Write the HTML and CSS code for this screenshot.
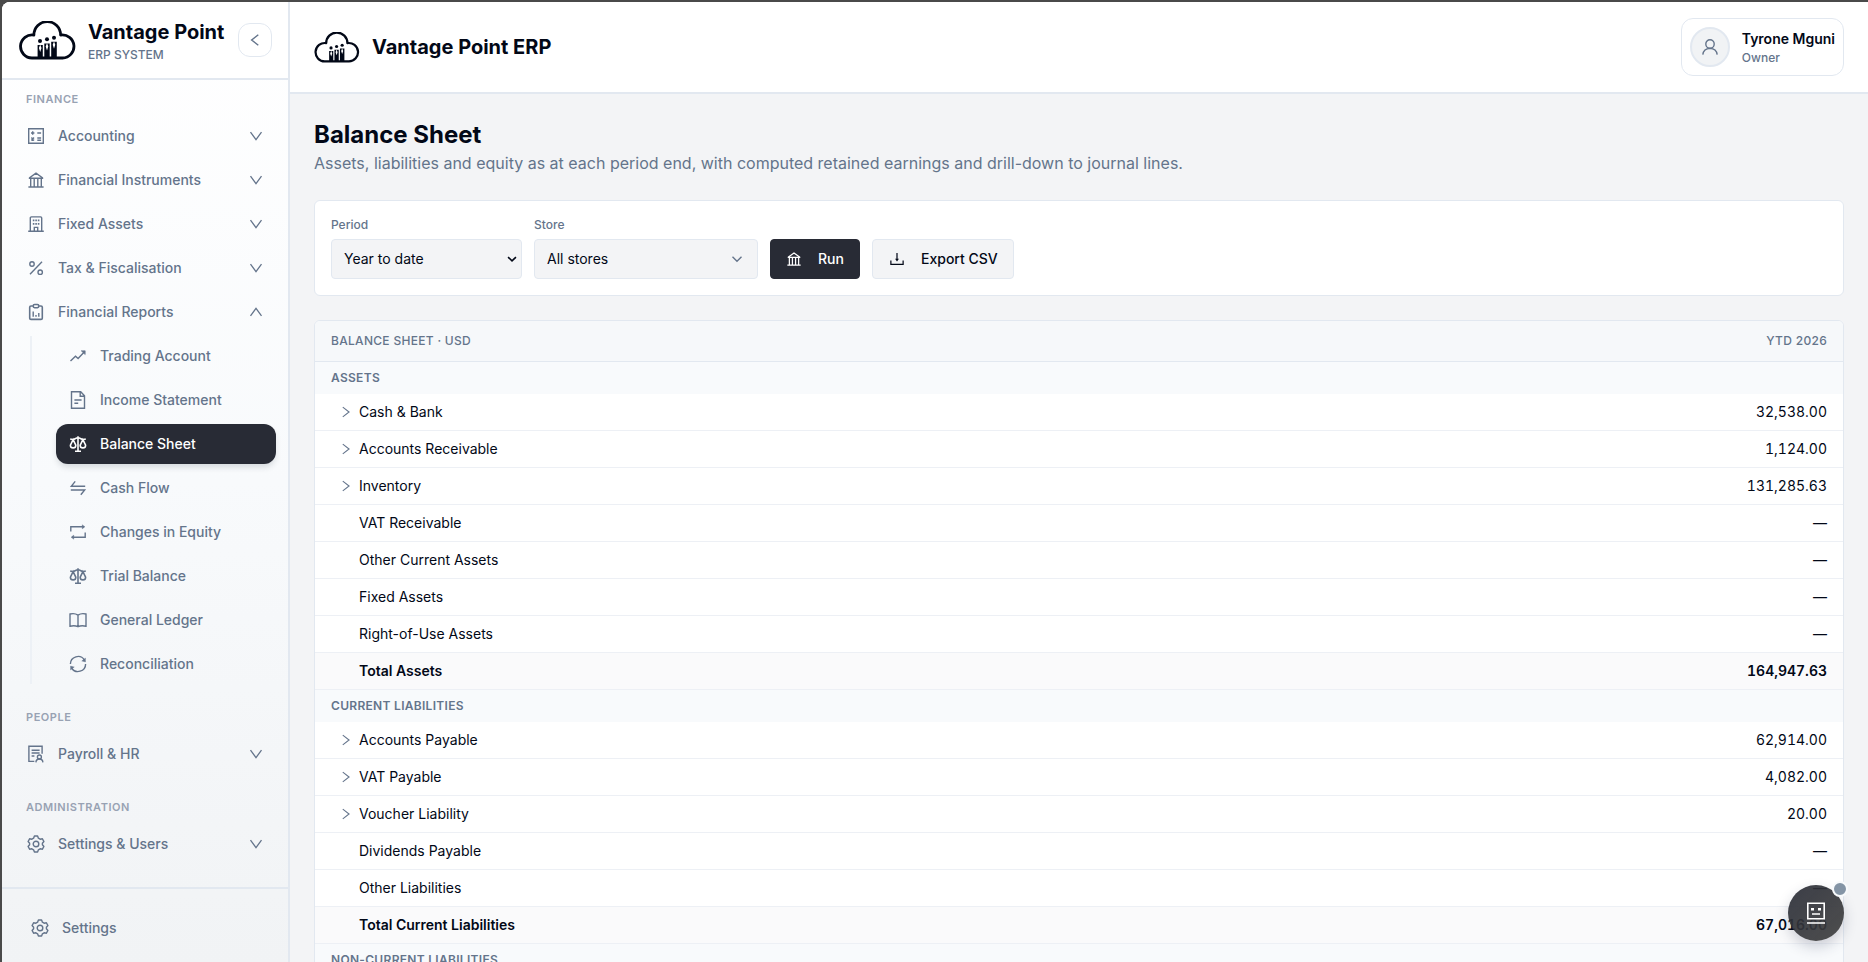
FILE: index.html
```html
<!DOCTYPE html>
<html lang="en">
<head>
  <meta charset="UTF-8" />
  <title>Balance Sheet - Vantage Point ERP</title>
  <link rel="stylesheet" href="styles.css">
</head>
<body>
  <!-- Icon sprite -->
  <svg class="sprite" xmlns="http://www.w3.org/2000/svg">
    <symbol id="logo" viewBox="0 0 57 39">
      <path d="M13 37 A11.57 11.57 0 1 1 14.9 14 A13.3 13.3 0 0 1 41.6 14 A11.57 11.57 0 1 1 43.6 37 Z" fill="none" stroke="currentColor" stroke-width="2.8" stroke-linejoin="round"/>
      <g fill="currentColor">
        <circle cx="21" cy="20" r="2"/><circle cx="28" cy="18.2" r="2"/><circle cx="35" cy="16.7" r="2"/>
        <path d="M18.6 24h5.2v13.5h-5.2zM25.3 22.4h5.4v15.1h-5.4zM32.2 20.8h5.6v16.7h-5.6z"/>
      </g>
      <path d="M21.2 23.5l1.3 3.4-1.3 4-1.3-4zM28 22l1.3 3.4-1.3 4-1.3-4zM35 20.4l1.3 3.4-1.3 4-1.3-4z" fill="#fff"/>
    </symbol>
    <symbol id="down" viewBox="0 0 16 16"><path d="M2.5 4.2 8 11.6l5.5-7.4"/></symbol>
    <symbol id="up" viewBox="0 0 16 16"><path d="M2.5 11.8 8 4.4l5.5 7.4"/></symbol>
    <symbol id="left" viewBox="0 0 16 16"><path d="M11.3 2.7 4.6 8l6.7 5.3"/></symbol>
    <symbol id="right" viewBox="0 0 16 16"><path d="M4.3 2.5 11.5 8l-7.2 5.5"/></symbol>
    <symbol id="chev" viewBox="0 0 16 16"><path d="M3.5 5.8 8 10.2l4.5-4.4"/></symbol>
    <symbol id="calc" viewBox="0 0 16 16"><path d="M.7.7h14.6v14.6H.7zM3 5h3.4M4.7 3.3v3.4M9.3 5h3.8M3.4 9.6l2.6 2.8M6 9.6l-2.6 2.8M9.3 10h3.8M9.3 12.3h3.8"/></symbol>
    <symbol id="bank" viewBox="0 0 16 16"><path d="M.8 6.2h14.4M1.2 6 8 1.2 14.8 6M2.7 6.4v8M6.2 6.4v8M9.8 6.4v8M13.3 6.4v8M.4 15h15.2"/></symbol>
    <symbol id="building" viewBox="0 0 16 16"><path d="M2.3 15V2Q2.3.9 3.4.9h9.2q1.1 0 1.1 1.1v13M.2 15.2h15.6M6.3 15v-3.6h3.4V15"/><path d="M4.8 4.3h1.6M7.3 4.3h1.6M9.8 4.3h1.6M4.8 7.8h1.6M7.3 7.8h1.6M9.8 7.8h1.6" stroke-width="1.7"/></symbol>
    <symbol id="percent" viewBox="0 0 16 16"><path d="M14 1.8 2 14.2"/><circle cx="4" cy="4" r="2.2"/><circle cx="12.2" cy="12.2" r="2.2"/></symbol>
    <symbol id="report" viewBox="0 0 16 16"><path d="M5 2H3Q1.7 2 1.7 3.3v10.9q0 1.2 1.3 1.2h10q1.3 0 1.3-1.2V3.3Q14.3 2 13 2h-2M5.2 2q0-1.5 1.4-1.5h2.8q1.4 0 1.4 1.5t-1.4 1.7H6.6Q5.2 3.6 5.2 2z" stroke-width="1.6"/><path d="M5.2 7.5v5.2M8 11v1.7M10.8 9v3.7"/></symbol>
    <symbol id="trend" viewBox="0 0 16 16"><path d="M.5 13 5.5 8.2l2.6 2.4 6.6-7"/><path d="M11.2 2.8h4v3.8z" fill="currentColor" stroke-width=".6"/></symbol>
    <symbol id="doc" viewBox="0 0 16 16"><path d="M1.5-.3h9.2l3.8 4v12.6h-13zM10.2 0v4.3h4M4.4 8h7.2M4.4 11.2h3.8"/></symbol>
    <symbol id="scale" viewBox="0 0 16 16"><path d="M8 .2v14.6M.2 3.1q2.8.8 4.4-.1Q7 1.6 8 1.6t3.4 1.4q1.6.9 4.4.1M5 15.2h6M3.1 3.6.4 9.2q0 2.7 2.7 2.7t2.7-2.7zM12.9 3.6l-2.7 5.6q0 2.7 2.7 2.7t2.7-2.7z" stroke-width="1.6"/></symbol>
    <symbol id="swap" viewBox="0 0 16 16"><path d="M15.2 6.3H1.3L5.2 1.4M.8 10h13.9l-3.9 4.8"/></symbol>
    <symbol id="retweet" viewBox="0 0 16 16"><path d="M.8 7.6V2.8h13M15.2 8.4v4.8h-13"/><path d="M12.2.7v4.2l2.8-2.1zM3.8 11.1v4.2L1 13.2z" fill="currentColor" stroke-width=".3"/></symbol>
    <symbol id="book" viewBox="0 0 16 16"><path d="M8 3.1Q4.6.8 0 2v12.2q4.6-1.2 8 .5 3.4-1.7 8-.5V2Q11.4.8 8 3.1zM8 3v11.6"/></symbol>
    <symbol id="sync" viewBox="0 0 16 16"><path d="M.4 8.1A7.6 7.6 0 0 1 14.4 4M15.6 7.9A7.6 7.6 0 0 1 1.6 12"/><path d="M15.5 2v4l-3.8-1zM.5 14v-4l3.8 1z" fill="currentColor" stroke-width=".3"/></symbol>
    <symbol id="payroll" viewBox="0 0 16 16"><path d="M6.3 15.4H.9V.2h13.2v7.6M3.6 4.2h8M3.6 7h8M3.6 10h2.8"/><circle cx="11.4" cy="11" r="2"/><path d="M7.9 16.4q.2-3.4 3.5-3.4t3.5 3.4"/></symbol>
    <symbol id="gear" viewBox="0 0 16 16"><path d="M6.4 0h3.2l.8 2.2 1.7 1 2.3-.4 1.5 2.7-1.5 1.8v1.4l1.5 1.8-1.5 2.7-2.3-.4-1.7 1-.8 2.2H6.4l-.8-2.2-1.7-1-2.3.4L.1 10.500l1.5-1.8V7.300L.1 5.500l1.5-2.700 2.3.4 1.7-1z" stroke-linejoin="round"/><circle cx="8" cy="8" r="2.8"/></symbol>
    <symbol id="download" viewBox="0 0 16 16"><path d="M8 1.2v7.6M1 9.8v4.4h14V9.8"/><path d="M5.8 7.8h4.4L8 10.8z" fill="currentColor" stroke="none"/></symbol>
    <symbol id="user" viewBox="0 0 16 16"><circle cx="8" cy="5" r="4.2"/><path d="M.8 15.6Q1.6 9.6 8 9.4q6.4.2 7.2 6.2"/></symbol>
    <symbol id="robot" viewBox="0 0 20 24"><path d="M1.8 2.2h16.4v15.6H1.8zM6 13h8M1 22h18"/><path d="M5 7h3v2.6H5zM12 7h3v2.6h-3z" fill="currentColor" stroke="none"/></symbol>
  </svg>

  <div class="app">
    <aside class="sidebar">
      <div class="brand">
        <svg class="brand-logo"><use href="#logo"/></svg>
        <div class="brand-text">
          <strong>Vantage Point</strong>
          <span>ERP SYSTEM</span>
        </div>
        <button class="collapse"><svg class="icon"><use href="#left"/></svg></button>
      </div>

      <nav class="nav">
        <h3 class="nav-label">FINANCE</h3>
        <a class="nav-item"><svg class="icon"><use href="#calc"/></svg><span>Accounting</span><svg class="icon arrow"><use href="#down"/></svg></a>
        <a class="nav-item"><svg class="icon"><use href="#bank"/></svg><span>Financial Instruments</span><svg class="icon arrow"><use href="#down"/></svg></a>
        <a class="nav-item"><svg class="icon"><use href="#building"/></svg><span>Fixed Assets</span><svg class="icon arrow"><use href="#down"/></svg></a>
        <a class="nav-item"><svg class="icon"><use href="#percent"/></svg><span>Tax &amp; Fiscalisation</span><svg class="icon arrow"><use href="#down"/></svg></a>
        <a class="nav-item"><svg class="icon"><use href="#report"/></svg><span>Financial Reports</span><svg class="icon arrow"><use href="#up"/></svg></a>
        <div class="subnav">
          <a class="nav-item"><svg class="icon"><use href="#trend"/></svg><span>Trading Account</span></a>
          <a class="nav-item"><svg class="icon"><use href="#doc"/></svg><span>Income Statement</span></a>
          <a class="nav-item active"><svg class="icon"><use href="#scale"/></svg><span>Balance Sheet</span></a>
          <a class="nav-item"><svg class="icon"><use href="#swap"/></svg><span>Cash Flow</span></a>
          <a class="nav-item"><svg class="icon"><use href="#retweet"/></svg><span>Changes in Equity</span></a>
          <a class="nav-item"><svg class="icon"><use href="#scale"/></svg><span>Trial Balance</span></a>
          <a class="nav-item"><svg class="icon"><use href="#book"/></svg><span>General Ledger</span></a>
          <a class="nav-item"><svg class="icon"><use href="#sync"/></svg><span>Reconciliation</span></a>
        </div>
        <h3 class="nav-label">PEOPLE</h3>
        <a class="nav-item"><svg class="icon"><use href="#payroll"/></svg><span>Payroll &amp; HR</span><svg class="icon arrow"><use href="#down"/></svg></a>
        <h3 class="nav-label">ADMINISTRATION</h3>
        <a class="nav-item"><svg class="icon"><use href="#gear"/></svg><span>Settings &amp; Users</span><svg class="icon arrow"><use href="#down"/></svg></a>
      </nav>

      <div class="sidebar-footer">
        <a class="nav-item"><svg class="icon"><use href="#gear"/></svg><span>Settings</span></a>
      </div>
    </aside>

    <div class="main">
      <header class="topbar">
        <svg class="topbar-logo"><use href="#logo"/></svg>
        <div class="topbar-title">Vantage Point ERP</div>
        <div class="profile">
          <div class="avatar"><svg class="icon"><use href="#user"/></svg></div>
          <div class="profile-text">
            <strong>Tyrone Mguni</strong>
            <span>Owner</span>
          </div>
        </div>
      </header>

      <main class="content">
        <h1>Balance Sheet</h1>
        <p class="subtitle">Assets, liabilities and equity as at each period end, with computed retained earnings and drill-down to journal lines.</p>

        <section class="card filters">
          <div class="field period">
            <label>Period</label>
            <div class="select">Year to date<svg class="icon"><use href="#chev"/></svg></div>
          </div>
          <div class="field store">
            <label>Store</label>
            <div class="select">All stores<svg class="icon"><use href="#chev"/></svg></div>
          </div>
          <button class="btn btn-run"><svg class="icon"><use href="#bank"/></svg>Run</button>
          <button class="btn btn-export"><svg class="icon"><use href="#download"/></svg>Export CSV</button>
        </section>

        <section class="card report">
          <div class="row head"><span>BALANCE SHEET · USD</span><span>YTD 2026</span></div>

          <div class="row section">ASSETS</div>
          <div class="row"><svg class="icon"><use href="#right"/></svg><span>Cash &amp; Bank</span><b>32,538.00</b></div>
          <div class="row"><svg class="icon"><use href="#right"/></svg><span>Accounts Receivable</span><b>1,124.00</b></div>
          <div class="row"><svg class="icon"><use href="#right"/></svg><span>Inventory</span><b>131,285.63</b></div>
          <div class="row"><span>VAT Receivable</span><b>—</b></div>
          <div class="row"><span>Other Current Assets</span><b>—</b></div>
          <div class="row"><span>Fixed Assets</span><b>—</b></div>
          <div class="row"><span>Right-of-Use Assets</span><b>—</b></div>
          <div class="row total"><span>Total Assets</span><b>164,947.63</b></div>

          <div class="row section">CURRENT LIABILITIES</div>
          <div class="row"><svg class="icon"><use href="#right"/></svg><span>Accounts Payable</span><b>62,914.00</b></div>
          <div class="row"><svg class="icon"><use href="#right"/></svg><span>VAT Payable</span><b>4,082.00</b></div>
          <div class="row"><svg class="icon"><use href="#right"/></svg><span>Voucher Liability</span><b>20.00</b></div>
          <div class="row"><span>Dividends Payable</span><b>—</b></div>
          <div class="row"><span>Other Liabilities</span><b>—</b></div>
          <div class="row total"><span>Total Current Liabilities</span><b>67,016.00</b></div>

          <div class="row section">NON-CURRENT LIABILITIES</div>
        </section>
      </main>
    </div>
  </div>

  <div class="fab">
    <button class="fab-button"><svg class="icon"><use href="#robot"/></svg></button>
    <span class="fab-dot"></span>
  </div>
</body>
</html>
```
FILE: styles.css
```css
* {
  box-sizing: border-box;
}

body {
  margin: 0;
  height: 100vh;
  padding: 2px 0 0 2px;
  overflow: hidden;
  background: #4a4a4a;
  font-family: Inter, "Liberation Sans", sans-serif;
  font-size: 14px;
  line-height: 20px;
  color: #020817;
}

h1, h3, p {
  margin: 0;
}

button {
  font: inherit;
  padding: 0;
}

.sprite {
  position: absolute;
  width: 0;
  height: 0;
}

.icon {
  width: 16px;
  height: 16px;
  flex: none;
  overflow: visible;
  fill: none;
  stroke: currentColor;
  stroke-width: 1.4;
}

symbol {
  overflow: visible;
}

.app {
  display: flex;
  height: 100%;
  overflow: hidden;
  border-top-left-radius: 8px;
  background: #f3f4f6;
}

/* Sidebar */
.sidebar {
  display: flex;
  flex-direction: column;
  width: 288px;
  flex: none;
  border-right: 2px solid #e2e8f0;
  background: linear-gradient(180deg, #ffffff, #f8fafc 50%, #f1f3f5);
}

.brand {
  display: flex;
  align-items: center;
  height: 78px;
  flex: none;
  padding: 0 16px 0 17px;
  border-bottom: 2px solid #e2e8f0;
  background: #fff;
}

.brand-logo {
  width: 57px;
  height: 39px;
}

.brand-text {
  display: flex;
  flex-direction: column;
  flex: 1;
  margin-left: 12px;
  padding-top: 4px;
}

.brand-text strong {
  font-size: 20px;
  line-height: 25px;
  font-weight: 700;
  white-space: nowrap;
}

.brand-text span {
  font-size: 12px;
  line-height: 20px;
  font-weight: 500;
  color: #64748b;
}

.collapse {
  display: flex;
  align-items: center;
  justify-content: center;
  width: 34px;
  height: 34px;
  flex: none;
  border: 1px solid #e2e8f0;
  border-radius: 12px;
  background: #fff;
  color: #64748b;
}

.nav {
  display: flex;
  flex-direction: column;
  gap: 4px;
  flex: 1;
  padding: 10px 12px 0;
}

.nav-label {
  padding: 0 12px;
  margin-bottom: 4px;
  font-size: 11px;
  line-height: 18px;
  font-weight: 600;
  letter-spacing: 0.55px;
  color: #98a2b3;
}

.nav-item ~ .nav-label {
  margin-top: 19.8px;
}

.nav-item {
  display: flex;
  align-items: center;
  height: 40px;
  padding: 0 12px 0 14px;
  border-radius: 12px;
  font-weight: 500;
  color: #64748b;
}

.nav-item span {
  flex: 1;
  margin-left: 14px;
}

.arrow {
  stroke-width: 1.3;
}

.subnav {
  display: flex;
  flex-direction: column;
  gap: 4px;
  margin-left: 16px;
  padding-left: 24px;
  border-left: 2px solid #edf1f6;
}

.nav-item.active {
  background: #282b35;
  color: #fff;
  box-shadow: 0 4px 6px -1px rgba(30, 41, 59, 0.16);
}

.sidebar-footer {
  height: 75px;
  padding: 19px 16px 0;
  border-top: 2px solid #e2e8f0;
}

/* Top bar */
.main {
  display: flex;
  flex-direction: column;
  flex: 1;
  min-width: 0;
}

.topbar {
  display: flex;
  align-items: center;
  height: 92px;
  flex: none;
  padding: 0 24px;
  border-bottom: 2px solid #e2e8f0;
  background: #fff;
}

.topbar-logo {
  width: 46px;
  height: 31px;
}

.topbar-title {
  margin-left: 12px;
  font-size: 20px;
  line-height: 28px;
  font-weight: 700;
}

.profile {
  display: flex;
  align-items: center;
  gap: 12px;
  height: 58px;
  margin-left: auto;
  padding: 8px;
  border: 1px solid #e2e8f0;
  border-radius: 12px;
}

.avatar {
  display: flex;
  align-items: center;
  justify-content: center;
  width: 40px;
  height: 40px;
  border: 2px solid #e2e8f0;
  border-radius: 50%;
  background: #f1f3f5;
  color: #64748b;
}

.profile-text {
  display: flex;
  flex-direction: column;
  padding-top: 2px;
}

.profile-text strong {
  font-weight: 600;
  line-height: 20px;
}

.profile-text span {
  font-size: 12px;
  line-height: 18px;
  font-weight: 500;
  color: #64748b;
}

/* Page */
.content {
  flex: 1;
  min-height: 0;
  padding: 24px;
}

h1 {
  font-size: 24px;
  line-height: 34px;
  font-weight: 700;
}

.subtitle {
  padding-bottom: 2px;
  font-size: 16px;
  line-height: 22px;
  color: #64748b;
}

.card {
  margin-top: 24px;
  border: 1px solid #e2e8f0;
  border-radius: 6px;
  background: #fff;
  overflow: hidden;
}

.filters {
  display: flex;
  align-items: flex-end;
  gap: 12px;
  height: 96px;
  padding: 16px;
}

.field label {
  display: block;
  margin-bottom: 6px;
  font-size: 12px;
  line-height: 16px;
  font-weight: 500;
  color: #64748b;
}

.period {
  width: 191px;
}

.store {
  width: 224px;
}

.select {
  display: flex;
  align-items: center;
  justify-content: space-between;
  height: 40px;
  padding: 0 12px 1px;
  border: 1px solid #e2e8f0;
  border-radius: 4px;
  background: #f3f4f6;
}

.period .select {
  padding-right: 2px;
}

.period .select .icon {
  stroke-width: 1.8;
  width: 14px;
}

.store .select .icon {
  color: #64748b;
}

.btn {
  display: flex;
  align-items: center;
  height: 40px;
  gap: 17px;
  padding-bottom: 1px;
  border: 1px solid #e2e8f0;
  border-radius: 4px;
  font-weight: 500;
}

.btn .icon {
  width: 14px;
  height: 14px;
}

.btn-run {
  width: 90px;
  padding-left: 16px;
  border-color: #282b35;
  background: #282b35;
  color: #fff;
}

.btn-export {
  width: 142px;
  padding-left: 17px;
  background: #f3f4f6;
  color: #020817;
}

/* Report table */
.row {
  display: flex;
  align-items: center;
  height: 37px;
  padding: 0 16px 0 44px;
  border-bottom: 1px solid #edf0f5;
}

.row .icon {
  width: 14px;
  height: 14px;
  margin-left: -20px;
  margin-right: 6px;
  stroke-width: 1.25;
  color: #64748b;
}

.row b {
  margin-left: auto;
  font-weight: 400;
  font-variant-numeric: tabular-nums;
}

.row.head {
  justify-content: space-between;
  height: 41px;
  padding-left: 16px;
  border-bottom-color: #e2e8f0;
  background: #f6f8fa;
  font-size: 12px;
  line-height: 16px;
  font-weight: 500;
  letter-spacing: 0.3px;
  color: #64748b;
}

.row.section {
  height: 32px;
  padding-left: 16px;
  border-bottom: 0;
  background: #f8fafc;
  font-size: 12px;
  line-height: 16px;
  font-weight: 600;
  letter-spacing: 0.3px;
  color: #64748b;
}

.row.total {
  background: #fafafb;
}

.row.total span,
.row.total b {
  font-weight: 600;
}

/* Assistant button */
.fab {
  position: fixed;
  right: 24px;
  bottom: 21px;
}

.fab-button {
  display: flex;
  align-items: center;
  justify-content: center;
  width: 56px;
  height: 56px;
  border: 0;
  border-radius: 50%;
  background: linear-gradient(135deg, rgba(40, 43, 53, 0.91), rgba(64, 64, 64, 0.93));
  box-shadow: 0 6px 14px rgba(40, 50, 80, 0.22);
  color: #fff;
}

.fab-button .icon {
  width: 20px;
  height: 24px;
  stroke-width: 1.6;
}

.fab-dot {
  position: absolute;
  top: -4px;
  right: -4px;
  width: 16px;
  height: 16px;
  border: 2px solid #f8fafc;
  border-radius: 50%;
  background: #8494a5;
}
```
